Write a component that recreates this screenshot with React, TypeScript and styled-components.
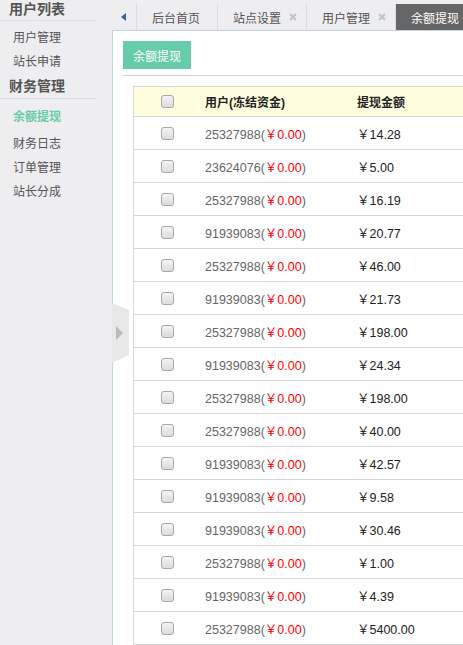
import styled, { createGlobalStyle } from "styled-components"

const GlobalStyle = createGlobalStyle`
    html, body {
        margin: 0;
        padding: 0;
        overflow: hidden;
        background: #eeeef0;
    }
    body {
        font-family: "Liberation Sans", "Noto Sans CJK SC", sans-serif;
        font-size: 12px;
        color: #555;
    }
`

const rows = [
    ["25327988", "14.28"],
    ["23624076", "5.00"],
    ["25327988", "16.19"],
    ["91939083", "20.77"],
    ["25327988", "46.00"],
    ["91939083", "21.73"],
    ["25327988", "198.00"],
    ["91939083", "24.34"],
    ["25327988", "198.00"],
    ["25327988", "40.00"],
    ["91939083", "42.57"],
    ["91939083", "9.58"],
    ["91939083", "30.46"],
    ["25327988", "1.00"],
    ["91939083", "4.39"],
    ["25327988", "5400.00"],
]

function CloseIcon() {
    return (
        <svg width="8" height="8" viewBox="0 0 8 8">
            <path d="M1 1L7 7M7 1L1 7" stroke="#c4c4c4" strokeWidth="2" />
        </svg>
    )
}

export default function App() {
    return (
        <Layout>
            <GlobalStyle />

            <Sidebar>
                <GroupTitle>用户列表</GroupTitle>
                <MenuList>
                    <MenuItem>用户管理</MenuItem>
                    <MenuItem>站长申请</MenuItem>
                </MenuList>
                <GroupTitle>财务管理</GroupTitle>
                <MenuList $top={6}>
                    <MenuItem $active>余额提现</MenuItem>
                    <MenuItem>财务日志</MenuItem>
                    <MenuItem>订单管理</MenuItem>
                    <MenuItem>站长分成</MenuItem>
                </MenuList>
            </Sidebar>

            <Main>
                <TabBar>
                    <TabArrow><ArrowLeft /></TabArrow>
                    <Tab $plain>后台首页</Tab>
                    <Tab>站点设置<CloseIcon /></Tab>
                    <Tab>用户管理<CloseIcon /></Tab>
                    <Tab $active>余额提现<CloseIcon /></Tab>
                </TabBar>

                <Panel>
                    <Toggle><ArrowRight /></Toggle>
                    <Button>余额提现</Button>
                    <Divider />
                    <Table>
                        <thead>
                            <tr>
                                <th><Check type="checkbox" /></th>
                                <th>用户(冻结资金)</th>
                                <th>提现金额</th>
                                <th></th>
                            </tr>
                        </thead>
                        <tbody>
                            {rows.map(([user, amount], i) => (
                                <tr key={i}>
                                    <td><Check type="checkbox" /></td>
                                    <td>{user}(<Frozen>￥0.00</Frozen>)</td>
                                    <td><Amount>￥{amount}</Amount></td>
                                    <td></td>
                                </tr>
                            ))}
                        </tbody>
                    </Table>
                </Panel>
            </Main>
        </Layout>
    )
}

const Layout = styled.div`
    display: grid;
    grid-template-columns: 112px 1fr;
    width: 100vw;
    height: 100vh;
    overflow: hidden;
    background: #eeeef0;
`

const Sidebar = styled.div`
    display: flex;
    flex-direction: column;
`

const GroupTitle = styled.div`
    width: 96px;
    height: 21px;
    line-height: 19px;
    padding-left: 9px;
    box-sizing: border-box;
    border-bottom: 1px solid #dcdce0;
    font-size: 14px;
    font-weight: bold;
    color: #555;

    & ~ & {
        height: 25px;
        line-height: 24px;
    }
`

const MenuList = styled.div<{ $top?: number }>`
    display: flex;
    flex-direction: column;
    padding-top: ${p => p.$top ?? 5}px;
`

const MenuItem = styled.div<{ $active?: boolean }>`
    height: 24px;
    line-height: 24px;
    padding-left: 13px;
    color: ${p => (p.$active ? "#66cca6" : "#555")};
    font-weight: ${p => (p.$active ? "bold" : "normal")};
    margin-bottom: ${p => (p.$active ? 3 : 0)}px;
`

const Main = styled.div`
    display: flex;
    flex-direction: column;
    min-width: 0;
`

const TabBar = styled.div`
    height: 30px;
    display: flex;
    align-items: flex-end;
    flex-shrink: 0;
    white-space: nowrap;
`

const TabArrow = styled.div`
    width: 24px;
    height: 26px;
    display: flex;
    align-items: center;
    justify-content: center;
    border-right: 1px solid #dcdcdc;
    flex-shrink: 0;
`

const ArrowLeft = styled.span`
    width: 0;
    height: 0;
    border-top: 4px solid transparent;
    border-bottom: 4px solid transparent;
    border-right: 5px solid #2b66b0;
    margin-right: 2px;
`

const Tab = styled.div<{ $active?: boolean; $plain?: boolean }>`
    height: 26px;
    display: flex;
    align-items: center;
    gap: 8px;
    padding: 0 ${p => (p.$plain ? 17 : 9)}px 0 15px;
    font-size: 12px;
    color: ${p => (p.$active ? "#fff" : "#555")};
    background: ${p => (p.$active ? "#666" : "transparent")};
    border-right: 1px solid ${p => (p.$active ? "#666" : "#dcdcdc")};
    flex-shrink: 0;
`

const Panel = styled.div`
    position: relative;
    flex: 1;
    background: #fff;
    border-top: 1px solid #c4d5df;
    border-left: 1px solid #c4d5df;
    padding: 10px 0 0 10px;
    width: 420px;
`

const Toggle = styled.div`
    position: absolute;
    left: -1px;
    top: 272px;
    width: 17px;
    height: 60px;
    background: #e8e8e8;
    clip-path: polygon(0 0, 100% 7px, 100% 52px, 0 100%);
    display: flex;
    align-items: center;
    justify-content: center;
`

const ArrowRight = styled.span`
    width: 0;
    height: 0;
    border-top: 7px solid transparent;
    border-bottom: 7px solid transparent;
    border-left: 7px solid #bbb;
    margin-left: -2px;
`

const Button = styled.button`
    width: 68px;
    height: 28px;
    border: none;
    background: #66ccaa;
    color: #fff;
    font-family: "Noto Sans CJK SC", sans-serif;
    font-size: 12px;
    padding: 0;
    cursor: pointer;
`

const Divider = styled.div`
    height: 1px;
    background: #d0d0d0;
    margin: 6px 0 10px;
`

const Table = styled.table`
    margin-left: 10px;
    width: 420px;
    border-collapse: collapse;
    border: 1px solid #d8d8d8;

    th, td {
        padding: 0 0 0 4px;
        text-align: left;
        white-space: nowrap;
        border-bottom: 1px solid #d8d8d8;
    }
    th {
        height: 29px;
        background: #ffffe0;
        font-weight: bold;
        color: #222;
    }
    td {
        height: 32px;
        color: #666;
        font-size: 12.5px;
    }
    th:first-child, td:first-child {
        width: 67px;
        text-align: center;
        padding: 0;
    }
    th:nth-child(2), td:nth-child(2) {
        width: 148px;
    }
    th:nth-child(3), td:nth-child(3) {
        width: 96px;
    }
`

const Check = styled.input`
    appearance: none;
    display: block;
    margin: 0 auto;
    width: 13px;
    height: 13px;
    border: 1px solid #a8a8a8;
    border-radius: 3px;
    background: linear-gradient(#f4f4f4, #dcdcdc);
    box-sizing: border-box;
`

const Frozen = styled.span`
    color: #f00;
`

const Amount = styled.span`
    color: #222;
`
